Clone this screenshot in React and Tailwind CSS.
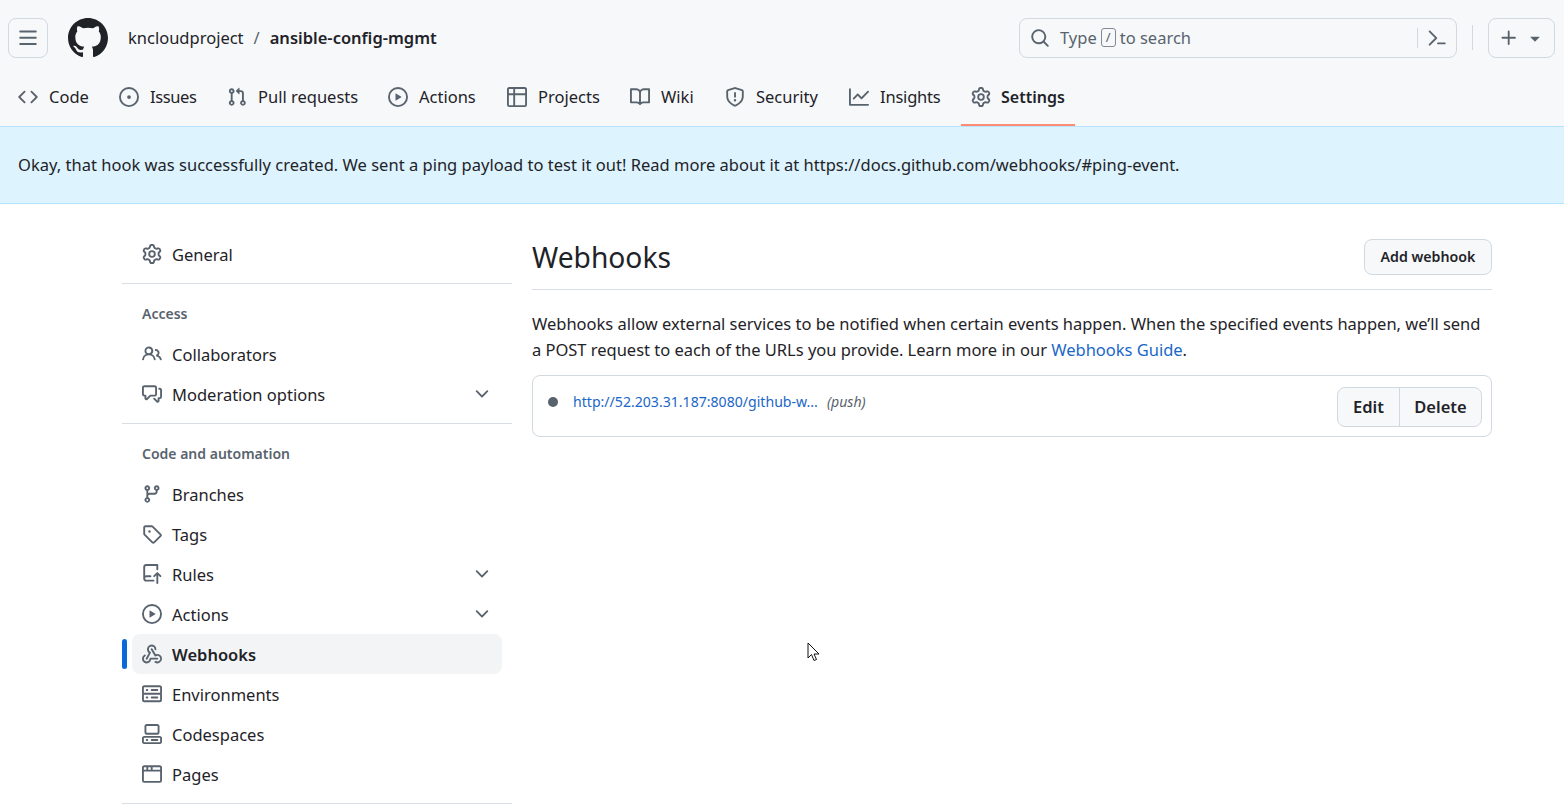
import React from "react";

const P = {
  bars: ["M1 2.75A.75.75 0 0 1 1.75 2h12.5a.75.75 0 0 1 0 1.5H1.75A.75.75 0 0 1 1 2.75Zm0 5A.75.75 0 0 1 1.75 7h12.5a.75.75 0 0 1 0 1.5H1.75A.75.75 0 0 1 1 7.75ZM1.75 12h12.5a.75.75 0 0 1 0 1.5H1.75a.75.75 0 0 1 0-1.5Z"],
  github: ["M8 0c4.42 0 8 3.58 8 8a8.013 8.013 0 0 1-5.45 7.59c-.4.08-.55-.17-.55-.38 0-.27.01-1.13.01-2.2 0-.75-.25-1.23-.54-1.48 1.78-.2 3.65-.88 3.65-3.95 0-.88-.31-1.59-.82-2.15.08-.2.36-1.02-.08-2.12 0 0-.67-.22-2.2.82-.64-.18-1.32-.27-2-.27-.68 0-1.36.09-2 .27-1.53-1.03-2.2-.82-2.2-.82-.44 1.1-.16 1.92-.08 2.12-.51.56-.82 1.28-.82 2.15 0 3.06 1.86 3.75 3.64 3.95-.23.2-.44.55-.51 1.07-.46.21-1.61.55-2.33-.66-.15-.24-.6-.83-1.23-.82-.67.01-.27.38.01.53.34.19.73.9.82 1.13.16.45.68 1.31 2.69.94 0 .67.01 1.3.01 1.49 0 .21-.15.45-.55.38A7.995 7.995 0 0 1 0 8c0-4.42 3.58-8 8-8Z"],
  webhook: ["M5.5 4.25a2.25 2.25 0 0 1 4.5 0 .75.75 0 0 0 1.5 0 3.75 3.75 0 1 0-6.14 2.889l-2.272 4.258a.75.75 0 0 0 1.324.706L7 7.25a.75.75 0 0 0-.309-1.023l-.13-.07A2.25 2.25 0 0 1 5.5 4.25Z", "M7.364 3.607a.75.75 0 0 1 1.03.257l2.608 4.349a3.75 3.75 0 1 1-.628 6.785.75.75 0 0 1 .752-1.299 2.25 2.25 0 1 0-.033-3.88.75.75 0 0 1-1.03-.256L7.107 4.636a.75.75 0 0 1 .257-1.03Z", "M2.9 8.776A.75.75 0 0 1 2.625 9.8 2.25 2.25 0 1 0 6 11.75a.75.75 0 0 1 .75-.751h5.5a.75.75 0 0 1 0 1.5H7.425a3.751 3.751 0 1 1-5.55-3.998.75.75 0 0 1 1.024.274Z"],
  code: ["m11.28 3.22 4.25 4.25a.75.75 0 0 1 0 1.06l-4.25 4.25a.749.749 0 0 1-1.275-.326.749.749 0 0 1 .215-.734L13.94 8l-3.72-3.72a.749.749 0 0 1 .326-1.275.749.749 0 0 1 .734.215Zm-6.56 0a.751.751 0 0 1 1.042.018.751.751 0 0 1 .018 1.042L2.06 8l3.72 3.72a.749.749 0 0 1-.326 1.275.749.749 0 0 1-.734-.215L.47 8.53a.75.75 0 0 1 0-1.06Z"],
  issue: ["M8 9.5a1.5 1.5 0 1 0 0-3 1.5 1.5 0 0 0 0 3Z", "M8 0a8 8 0 1 1 0 16A8 8 0 0 1 8 0ZM1.5 8a6.5 6.5 0 1 0 13 0 6.5 6.5 0 0 0-13 0Z"],
  pr: ["M1.5 3.25a2.25 2.25 0 1 1 3 2.122v5.256a2.251 2.251 0 1 1-1.5 0V5.372A2.25 2.25 0 0 1 1.5 3.25Zm5.677-.177L9.573.677A.25.25 0 0 1 10 .854V2.5h1A2.5 2.5 0 0 1 13.5 5v5.628a2.251 2.251 0 1 1-1.5 0V5a1 1 0 0 0-1-1h-1v1.646a.25.25 0 0 1-.427.177L7.177 3.427a.25.25 0 0 1 0-.354ZM3.75 2.5a.75.75 0 1 0 0 1.5.75.75 0 0 0 0-1.5Zm0 9.5a.75.75 0 1 0 0 1.5.75.75 0 0 0 0-1.5Zm8.25.75a.75.75 0 1 0 1.5 0 .75.75 0 0 0-1.5 0Z"],
  play: ["M8 0a8 8 0 1 1 0 16A8 8 0 0 1 8 0ZM1.5 8a6.5 6.5 0 1 0 13 0 6.5 6.5 0 0 0-13 0Zm4.879-2.773 4.264 2.559a.25.25 0 0 1 0 .428l-4.264 2.559A.25.25 0 0 1 6 10.559V5.442a.25.25 0 0 1 .379-.215Z"],
  table: ["M0 1.75C0 .784.784 0 1.75 0h12.5C15.216 0 16 .784 16 1.75v12.5A1.75 1.75 0 0 1 14.25 16H1.75A1.75 1.75 0 0 1 0 14.25ZM6.5 6.5v8h7.75a.25.25 0 0 0 .25-.25V6.5Zm8-1.5V1.75a.25.25 0 0 0-.25-.25H6.5V5Zm-13 1.5v7.75c0 .138.112.25.25.25H5v-8ZM5 5V1.5H1.75a.25.25 0 0 0-.25.25V5Z"],
  book: ["M0 1.75A.75.75 0 0 1 .75 1h4.253c1.227 0 2.317.59 3 1.501A3.743 3.743 0 0 1 11.006 1h4.245a.75.75 0 0 1 .75.75v10.5a.75.75 0 0 1-.75.75h-4.507a2.25 2.25 0 0 0-1.591.659l-.622.621a.75.75 0 0 1-1.06 0l-.622-.621A2.25 2.25 0 0 0 5.258 13H.75a.75.75 0 0 1-.75-.75Zm7.251 10.324.004-5.073-.002-2.253A2.25 2.25 0 0 0 5.003 2.5H1.5v9h3.757a3.75 3.75 0 0 1 1.994.574ZM8.755 4.75l-.004 7.322a3.752 3.752 0 0 1 1.992-.572H14.5v-9h-3.495a2.25 2.25 0 0 0-2.25 2.25Z"],
  shield: ["M7.467.133a1.748 1.748 0 0 1 1.066 0l5.25 1.68A1.75 1.75 0 0 1 15 3.48V7c0 1.566-.32 3.182-1.303 4.682-.983 1.498-2.585 2.813-5.032 3.855a1.697 1.697 0 0 1-1.33 0c-2.447-1.042-4.049-2.357-5.032-3.855C1.32 10.182 1 8.566 1 7V3.48a1.75 1.75 0 0 1 1.217-1.667Zm.61 1.429a.25.25 0 0 0-.153 0l-5.25 1.68a.25.25 0 0 0-.174.238V7c0 1.358.275 2.666 1.057 3.86.784 1.194 2.121 2.34 4.366 3.297a.196.196 0 0 0 .154 0c2.245-.956 3.582-2.104 4.366-3.298C13.225 9.666 13.5 8.36 13.5 7V3.48a.251.251 0 0 0-.174-.237l-5.25-1.68ZM8.75 4.75v3a.75.75 0 0 1-1.5 0v-3a.75.75 0 0 1 1.5 0ZM9 10.5a1 1 0 1 1-2 0 1 1 0 0 1 2 0Z"],
  graph: ["M1.5 1.75V13.5h13.75a.75.75 0 0 1 0 1.5H.75a.75.75 0 0 1-.75-.75V1.75a.75.75 0 0 1 1.5 0Zm14.28 2.53-5.25 5.25a.75.75 0 0 1-1.06 0L7 7.06 4.28 9.78a.751.751 0 0 1-1.042-.018.751.751 0 0 1-.018-1.042l3.25-3.25a.75.75 0 0 1 1.06 0L10 7.94l4.72-4.72a.751.751 0 0 1 1.042.018.751.751 0 0 1 .018 1.042Z"],
  gear: ["M8 0a8.2 8.2 0 0 1 .701.031C9.444.095 9.99.645 10.16 1.29l.288 1.107c.018.066.079.158.212.224.231.114.454.243.668.386.123.082.233.09.299.071l1.103-.303c.644-.176 1.392.021 1.82.63.27.385.506.792.704 1.218.315.675.111 1.422-.364 1.891l-.814.806c-.049.048-.098.147-.088.294.016.257.016.515 0 .772-.01.147.038.246.088.294l.814.806c.475.469.679 1.216.364 1.891a7.977 7.977 0 0 1-.704 1.217c-.428.61-1.176.807-1.82.63l-1.102-.302c-.067-.019-.177-.011-.3.071a5.909 5.909 0 0 1-.668.386c-.133.066-.194.158-.211.224l-.29 1.106c-.168.646-.715 1.196-1.458 1.26a8.006 8.006 0 0 1-1.402 0c-.743-.064-1.289-.614-1.458-1.26l-.289-1.106c-.018-.066-.079-.158-.212-.224a5.738 5.738 0 0 1-.668-.386c-.123-.082-.233-.09-.299-.071l-1.103.303c-.644.176-1.392-.021-1.82-.63a8.12 8.12 0 0 1-.704-1.218c-.315-.675-.111-1.422.363-1.891l.815-.806c.05-.048.098-.147.088-.294a6.214 6.214 0 0 1 0-.772c.01-.147-.038-.246-.088-.294l-.815-.806C.635 6.045.431 5.298.746 4.623a7.92 7.92 0 0 1 .704-1.217c.428-.61 1.176-.807 1.82-.63l1.102.302c.067.019.177.011.3-.071.214-.143.437-.272.668-.386.133-.066.194-.158.211-.224l.29-1.106C6.009.645 6.556.095 7.299.03 7.53.01 7.764 0 8 0Zm-.571 1.525c-.036.003-.108.036-.137.146l-.289 1.105c-.147.561-.549.967-.998 1.189-.173.086-.34.183-.5.29-.417.278-.97.423-1.529.27l-1.103-.303c-.109-.03-.175.016-.195.045-.22.312-.412.644-.573.99-.014.031-.021.11.059.19l.815.806c.411.406.562.957.53 1.456a4.709 4.709 0 0 0 0 .582c.032.499-.119 1.05-.53 1.456l-.815.806c-.081.08-.073.159-.059.19.162.346.353.677.573.989.02.03.085.076.195.046l1.102-.303c.56-.153 1.113-.008 1.53.27.161.107.328.204.501.29.447.222.85.629.997 1.189l.289 1.105c.029.109.101.143.137.146a6.6 6.6 0 0 0 1.142 0c.036-.003.108-.036.137-.146l.289-1.105c.147-.561.549-.967.998-1.189.173-.086.34-.183.5-.29.417-.278.97-.423 1.529-.27l1.103.303c.109.029.175-.016.195-.045.22-.313.411-.644.573-.99.014-.031.021-.11-.059-.19l-.815-.806c-.411-.406-.562-.957-.53-1.456a4.709 4.709 0 0 0 0-.582c-.032-.499.119-1.05.53-1.456l.815-.806c.081-.08.073-.159.059-.19a6.464 6.464 0 0 0-.573-.989c-.02-.03-.085-.076-.195-.046l-1.102.303c-.56.153-1.113.008-1.53-.27a4.44 4.44 0 0 0-.501-.29c-.447-.222-.85-.629-.997-1.189l-.289-1.105c-.029-.11-.101-.143-.137-.146a6.6 6.6 0 0 0-1.142 0ZM11 8a3 3 0 1 1-6 0 3 3 0 0 1 6 0ZM9.5 8a1.5 1.5 0 1 0-3.001.001A1.5 1.5 0 0 0 9.5 8Z"],
  search: ["M10.68 11.74a6 6 0 0 1-7.922-8.982 6 6 0 0 1 8.982 7.922l3.04 3.04a.749.749 0 0 1-.326 1.275.749.749 0 0 1-.734-.215ZM11.5 7a4.499 4.499 0 1 0-8.997 0A4.499 4.499 0 0 0 11.5 7Z"],
  palette: ["m6.354 8.04-4.773 4.773a.75.75 0 1 0 1.061 1.06L7.945 8.57a.75.75 0 0 0 0-1.06L2.642 2.206a.75.75 0 0 0-1.06 1.061L6.353 8.04ZM8.75 11.5a.75.75 0 0 0 0 1.5h5.5a.75.75 0 0 0 0-1.5h-5.5Z"],
  plus: ["M7.75 2a.75.75 0 0 1 .75.75V7h4.25a.75.75 0 0 1 0 1.5H8.5v4.25a.75.75 0 0 1-1.5 0V8.5H2.75a.75.75 0 0 1 0-1.5H7V2.75A.75.75 0 0 1 7.75 2Z"],
  tri: ["m4.427 7.427 3.396 3.396a.25.25 0 0 0 .354 0l3.396-3.396A.25.25 0 0 0 11.396 7H4.604a.25.25 0 0 0-.177.427Z"],
  people: ["M2 5.5a3.5 3.5 0 1 1 5.898 2.549 5.508 5.508 0 0 1 3.034 4.084.75.75 0 1 1-1.482.235 4 4 0 0 0-7.9 0 .75.75 0 0 1-1.482-.236A5.507 5.507 0 0 1 3.102 8.05 3.493 3.493 0 0 1 2 5.5ZM11 4a3.001 3.001 0 0 1 2.22 5.018 5.01 5.01 0 0 1 2.56 3.012.749.749 0 0 1-.885.954.752.752 0 0 1-.549-.514 3.507 3.507 0 0 0-2.522-2.372.75.75 0 0 1-.574-.73v-.352a.75.75 0 0 1 .416-.672A1.5 1.5 0 0 0 11 5.5.75.75 0 0 1 11 4Zm-5.5-.5a2 2 0 1 0-.001 3.999A2 2 0 0 0 5.5 3.5Z"],
  discussion: ["M1.75 1h8.5c.966 0 1.75.784 1.75 1.75v5.5A1.75 1.75 0 0 1 10.25 10H7.061l-2.574 2.573A1.458 1.458 0 0 1 2 11.543V10h-.25A1.75 1.75 0 0 1 0 8.25v-5.5C0 1.784.784 1 1.75 1ZM1.5 2.75v5.5c0 .138.112.25.25.25h1a.75.75 0 0 1 .75.75v2.19l2.72-2.72a.749.749 0 0 1 .53-.22h3.5a.25.25 0 0 0 .25-.25v-5.5a.25.25 0 0 0-.25-.25h-8.5a.25.25 0 0 0-.25.25Zm13 2a.25.25 0 0 0-.25-.25h-.5a.75.75 0 0 1 0-1.5h.5c.966 0 1.75.784 1.75 1.75v5.5A1.75 1.75 0 0 1 14.25 12H14v1.543a1.458 1.458 0 0 1-2.487 1.03L9.22 12.28a.749.749 0 0 1 .326-1.275.749.749 0 0 1 .734.215l2.22 2.22v-2.19a.75.75 0 0 1 .75-.75h1a.25.25 0 0 0 .25-.25Z"],
  branch: ["M9.5 3.25a2.25 2.25 0 1 1 3 2.122V6A2.5 2.5 0 0 1 10 8.5H6a1 1 0 0 0-1 1v1.128a2.251 2.251 0 1 1-1.5 0V5.372a2.25 2.25 0 1 1 1.5 0v1.836A2.493 2.493 0 0 1 6 7h4a1 1 0 0 0 1-1v-.628A2.25 2.25 0 0 1 9.5 3.25Zm-6 0a.75.75 0 1 0 1.5 0 .75.75 0 0 0-1.5 0Zm8.25-.75a.75.75 0 1 0 0 1.5.75.75 0 0 0 0-1.5ZM4.25 12a.75.75 0 1 0 0 1.5.75.75 0 0 0 0-1.5Z"],
  tag: ["M1 7.775V2.75C1 1.784 1.784 1 2.75 1h5.025c.464 0 .91.184 1.238.513l6.25 6.25a1.75 1.75 0 0 1 0 2.474l-5.026 5.026a1.75 1.75 0 0 1-2.474 0l-6.25-6.25A1.752 1.752 0 0 1 1 7.775Zm1.5 0c0 .066.026.13.073.177l6.25 6.25a.25.25 0 0 0 .354 0l5.025-5.025a.25.25 0 0 0 0-.354l-6.25-6.25a.25.25 0 0 0-.177-.073H2.75a.25.25 0 0 0-.25.25ZM6 5a1 1 0 1 1 0 2 1 1 0 0 1 0-2Z"],
  push: ["M1 2.5A2.5 2.5 0 0 1 3.5 0h8.75a.75.75 0 0 1 .75.75v3.5a.75.75 0 0 1-1.5 0V1.5h-8a1 1 0 0 0-1 1v6.708A2.493 2.493 0 0 1 3.5 9h3.25a.75.75 0 0 1 0 1.5H3.5a1 1 0 0 0 0 2h5.75a.75.75 0 0 1 0 1.5H3.5A2.5 2.5 0 0 1 1 11.5Zm13.23 7.79h-.001l-1.224-1.224v6.184a.75.75 0 0 1-1.5 0V9.066L10.28 10.29a.75.75 0 0 1-1.06-1.061l2.505-2.504a.75.75 0 0 1 1.06 0L15.29 9.23a.751.751 0 0 1-.018 1.042.751.751 0 0 1-1.042.018Z"],
  server: ["M1.75 1h12.5c.966 0 1.75.784 1.75 1.75v4c0 .372-.116.717-.314 1 .198.283.314.628.314 1v4a1.75 1.75 0 0 1-1.75 1.75H1.75A1.75 1.75 0 0 1 0 12.75v-4c0-.358.109-.707.314-1a1.739 1.739 0 0 1-.314-1v-4C0 1.784.784 1 1.75 1ZM1.5 2.75v4c0 .138.112.25.25.25h12.5a.25.25 0 0 0 .25-.25v-4a.25.25 0 0 0-.25-.25H1.75a.25.25 0 0 0-.25.25Zm.25 5.75a.25.25 0 0 0-.25.25v4c0 .138.112.25.25.25h12.5a.25.25 0 0 0 .25-.25v-4a.25.25 0 0 0-.25-.25ZM7 4.75A.75.75 0 0 1 7.75 4h4.5a.75.75 0 0 1 0 1.5h-4.5A.75.75 0 0 1 7 4.75ZM7.75 10h4.5a.75.75 0 0 1 0 1.5h-4.5a.75.75 0 0 1 0-1.5ZM3 4.75A.75.75 0 0 1 3.75 4h.5a.75.75 0 0 1 0 1.5h-.5A.75.75 0 0 1 3 4.75ZM3.75 10h.5a.75.75 0 0 1 0 1.5h-.5a.75.75 0 0 1 0-1.5Z"],
  codespaces: ["M0 11.25c0-.966.784-1.75 1.75-1.75h12.5c.966 0 1.75.784 1.75 1.75v3A1.75 1.75 0 0 1 14.25 16H1.75A1.75 1.75 0 0 1 0 14.25Zm2-9.5C2 .784 2.784 0 3.75 0h8.5C13.216 0 14 .784 14 1.75v5a1.75 1.75 0 0 1-1.75 1.75h-8.5A1.75 1.75 0 0 1 2 6.75Zm1.75-.25a.25.25 0 0 0-.25.25v5c0 .138.112.25.25.25h8.5a.25.25 0 0 0 .25-.25v-5a.25.25 0 0 0-.25-.25Zm-2 9.5a.25.25 0 0 0-.25.25v3c0 .138.112.25.25.25h12.5a.25.25 0 0 0 .25-.25v-3a.25.25 0 0 0-.25-.25Z", "M7 12.75a.75.75 0 0 1 .75-.75h4.5a.75.75 0 0 1 0 1.5h-4.5a.75.75 0 0 1-.75-.75Zm-4 0a.75.75 0 0 1 .75-.75h.5a.75.75 0 0 1 0 1.5h-.5a.75.75 0 0 1-.75-.75Z"],
  browser: ["M0 2.75C0 1.784.784 1 1.75 1h12.5c.966 0 1.75.784 1.75 1.75v10.5A1.75 1.75 0 0 1 14.25 15H1.75A1.75 1.75 0 0 1 0 13.25ZM14.5 6h-13v7.25c0 .138.112.25.25.25h12.5a.25.25 0 0 0 .25-.25Zm-6-3.5v2H14.5V2.75a.25.25 0 0 0-.25-.25ZM5 2.5v2h2v-2Zm-3.25 0a.25.25 0 0 0-.25.25V4.5h2v-2Z"],
  chevron: ["M12.78 5.22a.749.749 0 0 1 0 1.06l-4.25 4.25a.749.749 0 0 1-1.06 0L3.22 6.28a.749.749 0 1 1 1.06-1.06L8 8.939l3.72-3.719a.749.749 0 0 1 1.06 0Z"],
};

const Oct = ({ name, size = 20, className = "" }) => (
  <svg width={size} height={size} viewBox="0 0 16 16" fill="currentColor" className={`shrink-0 ${className}`}>
    {P[name].map((d, i) => <path key={i} d={d} />)}
  </svg>
);

const tabs = [
  ["code", "Code", "w-[91px]"], ["issue", "Issues", "w-[98px] tracking-[-0.4px]"], ["pr", "Pull requests", "w-[151px]"], ["play", "Actions", "w-[109px]"],
  ["table", "Projects", "w-[113px]"], ["book", "Wiki", "w-[85px]"], ["shield", "Security", "w-[114px]"], ["graph", "Insights", "w-[112px] tracking-[-0.2px]"], ["gear", "Settings", "w-[114px] text-[16px]", true],
];

function SideItem({ icon, label, chevron, active }) {
  return (
    <div className="relative h-10 flex items-center">
      {active && <div className="absolute left-0 top-[5px] w-[5px] h-[30px] rounded-[3px] bg-[#0969da]" />}
      <div className={`ml-[10px] mr-[10px] flex-1 h-10 rounded-lg flex items-center pl-[10px] pr-[10px] ${active ? "bg-[#f3f4f6] font-semibold" : ""}`}>
        <Oct name={icon} className="text-[#59636e]" />
        <span className="ml-[10px] mt-[2px] text-[#1f2328]">{label}</span>
        {chevron && <Oct name="chevron" className="ml-auto text-[#59636e]" />}
      </div>
    </div>
  );
}

function SideHead({ children }) {
  return <div className="h-[41px] pb-[1px] pl-[20px] flex items-center text-[14px] font-semibold text-[#59636e] mt-[9px]">{children}</div>;
}

export default function App() {
  return (
    <div className="h-[804px] overflow-hidden bg-white text-[16.5px] text-[#1f2328] relative" style={{ fontFamily: '"Noto Sans", sans-serif' }}>
      <header className="bg-[#f6f8fa] h-[127px] border-b border-[#b6e3ff]">
        <div className="h-[75px] flex items-center pl-2 pr-[9px]">
          <div className="w-10 h-10 rounded-lg border border-[#d1d9e0] flex items-center justify-center text-[#59636e]"><Oct name="bars" /></div>
          <Oct name="github" size={40} className="ml-5 text-[#1f2328]" />
          <span className="ml-5 mt-[1px] text-[#1f2328]">kncloudproject</span>
          <span className="ml-[10px] mt-[1px] text-[#59636e]">/</span>
          <span className="ml-[10px] mt-[1px] font-semibold">ansible-config-mgmt</span>
          <div className="ml-auto w-[438px] h-10 rounded-lg border border-[#d1d9e0] flex items-center pl-[10px] text-[#59636e]">
            <Oct name="search" />
            <span className="ml-[10px] mt-[1px]">Type</span>
            <span className="mx-[4px] w-[15px] h-[19px] rounded-[3px] border border-[#818b98] text-[13px] flex items-center justify-center">/</span>
            <span className="mt-[1px]">to search</span>
            <span className="ml-auto h-5 w-px bg-[#d1d9e0]" />
            <Oct name="palette" className="mx-[9px]" />
          </div>
          <div className="mx-[15px] h-[25px] w-px bg-[#d1d9e0]" />
          <div className="w-[67px] h-10 rounded-lg border border-[#d1d9e0] flex items-center pl-[10px] text-[#59636e]">
            <Oct name="plus" />
            <Oct name="tri" className="ml-[6px]" />
          </div>
        </div>
        <nav className="h-[51px] flex items-start pl-2 gap-[10px]">
          {tabs.map(([icon, label, w, active]) => (
            <div key={label} className={`h-[51px] px-[10px] flex items-center pb-[5px] border-b-[2.5px] whitespace-nowrap ${w} ${active ? "border-[#fd8c73] font-semibold" : "border-transparent"}`}>
              <Oct name={icon} className="text-[#59636e]" />
              <span className={active ? "ml-[10px]" : "ml-[11px]"}>{label}</span>
            </div>
          ))}
        </nav>
      </header>
      <div className="h-[77px] bg-[#ddf4ff] border-b border-[#b6e3ff] flex items-center pl-[18px] tracking-[0.013px]">
        Okay, that hook was successfully created. We sent a ping payload to test it out! Read more about it at https://docs.github.com/webhooks/#ping-event.
      </div>
      <div className="flex pl-[122px] pt-[31px]">
        <aside className="w-[390px] -mt-[1px]">
          <SideItem icon="gear" label="General" />
          <div className="border-t border-[#d8dee4] mt-[9px] mb-2" />
          <SideHead>Access</SideHead>
          <SideItem icon="people" label="Collaborators" />
          <SideItem icon="discussion" label="Moderation options" chevron />
          <div className="border-t border-[#d8dee4] mt-[9px] mb-2" />
          <SideHead>Code and automation</SideHead>
          <SideItem icon="branch" label="Branches" />
          <SideItem icon="tag" label="Tags" />
          <SideItem icon="push" label="Rules" chevron />
          <SideItem icon="play" label="Actions" chevron />
          <SideItem icon="webhook" label="Webhooks" active />
          <SideItem icon="server" label="Environments" />
          <SideItem icon="codespaces" label="Codespaces" />
          <SideItem icon="browser" label="Pages" />
          <div className="border-t border-[#d8dee4] mt-[9px]" />
        </aside>
        <main className="w-[960px] ml-5">
          <div className="flex items-center justify-between h-[44px] pb-[10px] border-b border-[#d8dee4] box-content">
            <h1 className="text-[28.2px] leading-[40px] font-normal">Webhooks</h1>
            <div className="h-9 w-[128px] rounded-lg border border-[#d1d9e0] bg-[#f6f8fa] flex items-center justify-center text-[14.2px] font-semibold">Add webhook</div>
          </div>
          <p className="mt-[21px] leading-[26px] tracking-[-0.02px]">
            Webhooks allow external services to be notified when certain events happen. When the specified events happen, we’ll send a POST request to each of the URLs you provide. Learn more in our <a className="text-[#1a67c8]">Webhooks Guide</a>.
          </p>
          <div className="mt-[12px] h-[62px] rounded-lg border border-[#d1d9e0] flex items-start pl-[15px] pr-[9px] pt-[11px]">
            <span className="mt-[10px] w-[10px] h-[10px] rounded-full bg-[#59636e]" />
            <a className="ml-[15px] mt-[4px] text-[14.1px] text-[#1a67c8]">http://52.203.31.187:8080/github-w...</a>
            <em className="ml-[9px] mt-[4px] text-[14.1px] text-[#59636e]">(push)</em>
            <div className="ml-auto h-10 flex rounded-lg border border-[#d1d9e0] bg-[#f6f8fa] font-semibold">
              <span className="w-[62px] flex items-center justify-center border-r border-[#d1d9e0]">Edit</span>
              <span className="w-[81px] flex items-center justify-center">Delete</span>
            </div>
          </div>
        </main>
      </div>
      <svg className="absolute left-[807px] top-[642px]" width="13" height="20" viewBox="0 0 13 20"><path d="M1 1v15l3.5-3.5L7 18.5l2.5-1-2.5-5.5h5z" fill="#fff" stroke="#111" strokeWidth="1" /></svg>
    </div>
  );
}
